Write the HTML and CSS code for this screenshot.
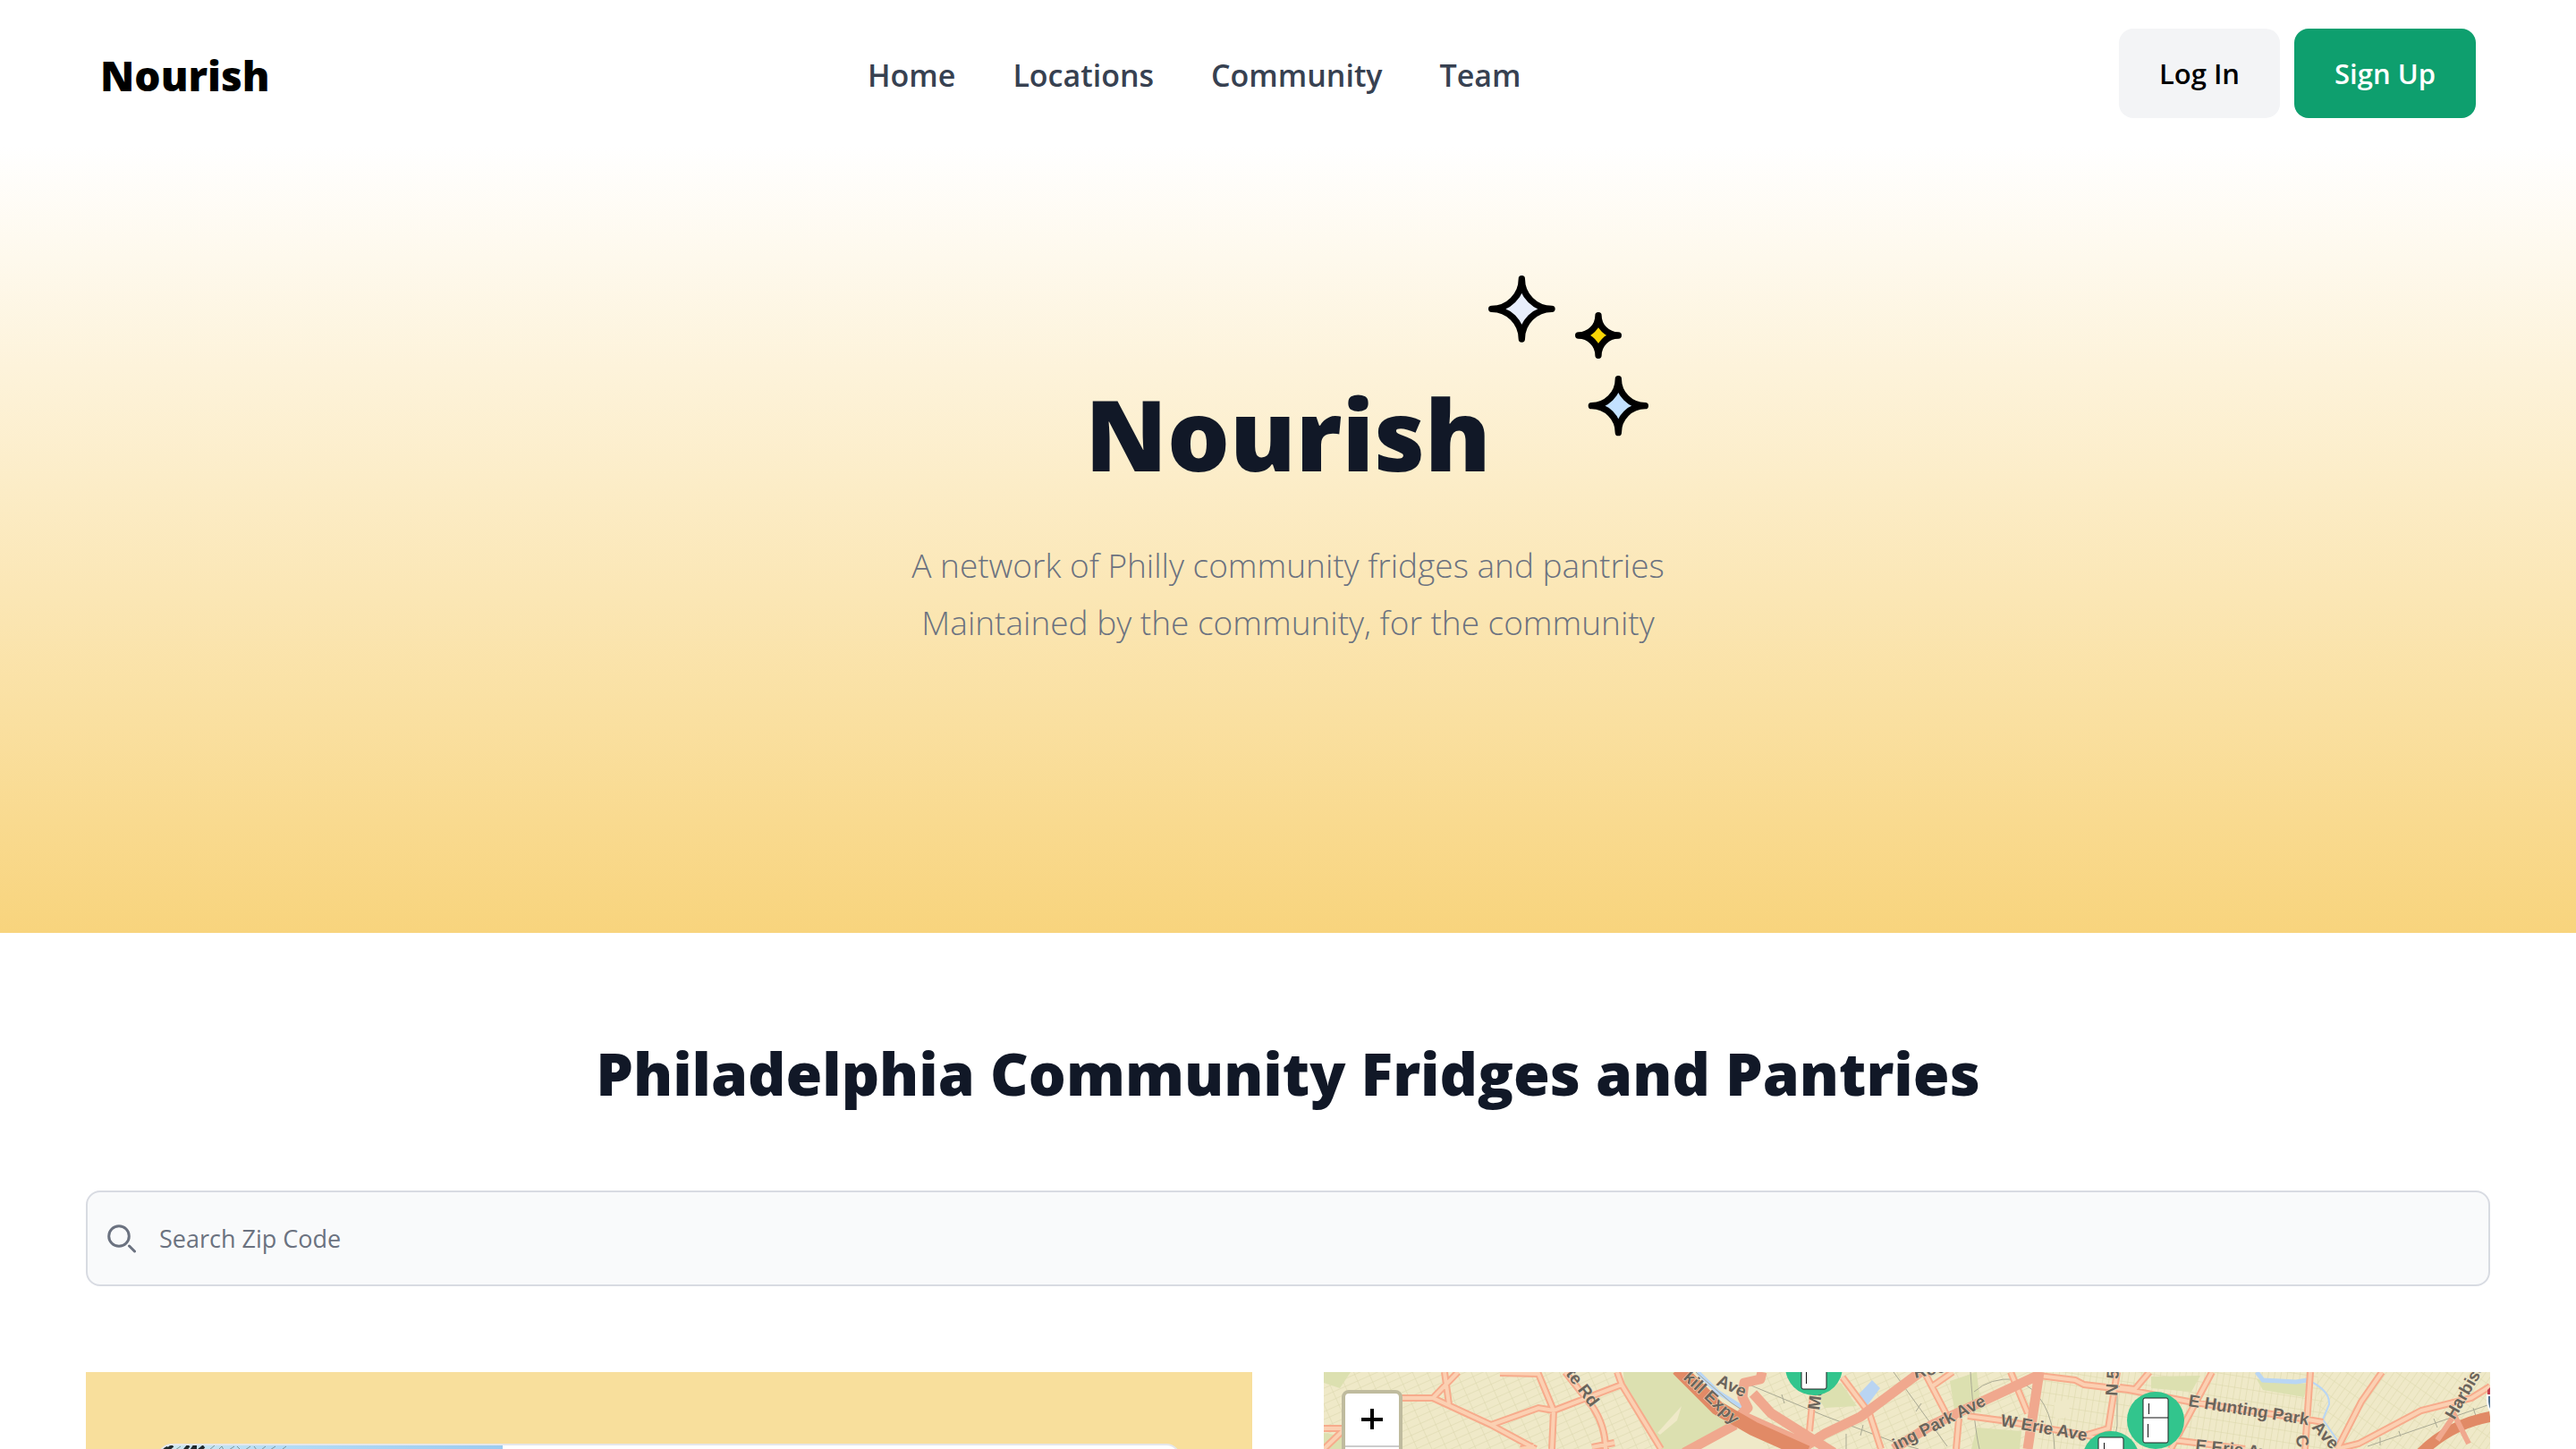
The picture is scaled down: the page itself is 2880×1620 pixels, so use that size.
FILE: index.html
```html
<!DOCTYPE html>
<html lang="en">
<head>
<meta charset="utf-8">
<meta name="viewport" content="width=device-width, initial-scale=1">
<title>Nourish</title>
<link rel="stylesheet" href="styles.css">
</head>
<body>
<header class="site-header">
  <a class="logo" href="#">Nourish</a>
  <nav class="nav">
    <a href="#">Home</a>
    <a href="#locations">Locations</a>
    <a href="#">Community</a>
    <a href="#">Team</a>
  </nav>
  <div class="actions">
    <button class="btn btn-light" type="button">Log In</button>
    <button class="btn btn-green" type="button">Sign Up</button>
  </div>
</header>

<section class="hero">
  <h1 class="hero-title">Nourish
    <svg class="sparkles" viewBox="0 0 720 660" aria-hidden="true">
      <path fill="#e8eefb" d="M187 65A101 101 0 0 0 288 166A101 101 0 0 0 187 267A101 101 0 0 0 86 166A101 101 0 0 0 187 65Z"/>
      <path fill="#f9d605" d="M444 188A67 67 0 0 0 511 255A67 67 0 0 0 444 322A67 67 0 0 0 377 255A67 67 0 0 0 444 188Z"/>
      <path fill="#c3e1ff" d="M511 401A90 90 0 0 0 601 491A90 90 0 0 0 511 581A90 90 0 0 0 421 491A90 90 0 0 0 511 401Z"/>
    </svg>
  </h1>
  <p class="hero-text">A network of Philly community fridges and pantries<br>Maintained by the community, for the community</p>
</section>

<main class="locations" id="locations">
  <h2 class="section-title">Philadelphia Community Fridges and Pantries</h2>
  <form class="search">
    <svg class="search-icon" viewBox="0 0 32 32" aria-hidden="true"><circle cx="13" cy="13" r="11.3"/><path d="M24.500 24L30.500 30"/></svg>
    <input class="search-input" type="search" placeholder="Search Zip Code" aria-label="Search Zip Code">
  </form>
  <div class="columns">
    <div class="list">
      <article class="card">
        <svg class="photo" viewBox="0 0 384 280" aria-hidden="true">
          <defs><linearGradient id="sky"><stop offset="0" stop-color="#cfe9ee"/><stop offset=".35" stop-color="#b4dcf6"/><stop offset="1" stop-color="#9ccbf0"/></linearGradient></defs>
          <rect width="384" height="280" fill="url(#sky)"/>
          <path stroke="#20292b" stroke-width="4" fill="none" d="M2 6L9 1M8 6L15 0M28 6L33 0M36 6L40 0L40 6M44 6L50 1"/>
          <path stroke="#7d9694" stroke-width="1" fill="none" d="M18 5L24 1M56 5L62 0M66 5L70 1L72 5M78 5L84 1M87 1L91 5M96 5L102 1M106 1L109 5M114 5L119 1M124 5L130 1M138 4L142 1"/>
        </svg>
      </article>
    </div>
    <div class="map">
      <svg class="map-art" viewBox="0 0 1304 652" aria-hidden="true">
        <defs>
          <pattern id="gridA" width="15" height="8" patternUnits="userSpaceOnUse" patternTransform="rotate(-24)"><path d="M0 0H15M0 0V8" stroke="#d9d5ac" fill="none"/></pattern>
          <pattern id="gridB" width="7" height="13" patternUnits="userSpaceOnUse" patternTransform="rotate(9)"><path d="M0 0H7M0 0V13" stroke="#d9d5a8" fill="none"/></pattern>
          <pattern id="gridC" width="7" height="16" patternUnits="userSpaceOnUse" patternTransform="rotate(35)"><path d="M0 0H7M0 0V16" stroke="#dbd7ac" fill="none"/></pattern>
        </defs>
        <rect width="1304" height="652" fill="#efe9c8"/>
        <path fill="url(#gridA)" d="M0 0H330L377 86V652H0Z"/>
        <path fill="url(#gridA)" d="M490 0H800L787 86V652H500Z"/>
        <path fill="url(#gridB)" d="M800 0H1110L1130 86V652H787Z"/>
        <path fill="url(#gridC)" d="M1110 0H1304V652H1130Z"/>
        <g fill="#dce0b0">
          <path d="M335 0H400L460 56L403 86H377L336 16Z"/>
          <path d="M0 0H30L18 18L0 12ZM0 68L24 72V86H0ZM545 18L578 12L596 38L560 40ZM700 10L730 0L735 45L705 42Z"/>
          <path d="M1043 8L1100 13L1096 28L1050 20ZM925 5L980 4L970 22L925 18ZM730 62L780 66L778 86H724Z"/>
        </g>
        <path fill="#efe9c8" d="M373 68L400 38L395 54L376 70ZM816 34L835 30L832 50L818 53Z"/>
        <g fill="#b9d4f2">
          <path d="M613 9L622 18L607 38L597 26Z"/>
          <path d="M473 49L503 59L540 76L535 80L500 67Z"/>
        </g>
        <g class="water">
          <path d="M418 0L440 22L467 39"/>
          <path d="M1043 0L1050 9L1087 11L1100 9"/>
          <path class="creek" d="M1100 9Q1125 20 1124 36L1117 53L1133 76V110"/>
        </g>
        <g class="rail">
          <path d="M416 0L455 34L470 44M473 13L560 49L640 79L665 86M637 0L697 83M723 0Q727 60 733 86M727 22Q745 6 773 8Q815 25 817 86M887 0V60L882 86M1167 83L1304 36"/>
          <path d="M512 25L515 35M603 59L600 71M668 35L662 44M584 69V86M1181 73V82M1241 52L1245 62M1285 40L1288 49M1202 66L1204 72"/>
        </g>
        <g class="road">
          <path id="streets" d="M0 63H24L0 86M85 29H122L187 59L237 86M122 29L150 0M135 0L140 36M197 1L240 2L257 43L255 86M187 59L240 40L257 43L333 14L328 0M333 14L377 86M270 0L300 38Q315 60 315 86M580 6L610 46L623 86M673 3L697 49M710 52L707 86M680 16L703 0M768 0L787 46M547 26L543 66M800 4L840 9L850 14L900 20L967 33L1100 53L1117 56M720 49L757 54L860 72M887 0L877 63L857 69L880 95M993 0L947 86M923 0L907 19L890 17M1103 0L1097 86M1183 0L1160 33L1133 86M1133 86L1157 80L1227 43L1283 29L1304 16M950 76L1030 86M220 86L235 83M300 84L325 79"/>
        </g>
        <g class="road-core"><use href="#streets"/></g>
        <g class="avenue">
          <path d="M527 92L540 82L560 69L600 50L667 0M637 86L680 59L800 3M800 0L787 86M490 0L488 8L470 12L468 28L474 40L466 48L537 80M480 24L500 46L543 73L570 90M403 90L460 59"/>
        </g>
        <g class="highway"><path d="M396 -4L440 40L480 63L540 90"/><path class="expressway" d="M1227 90Q1260 58 1304 50"/></g>
        <path class="ramp" d="M1245 76L1264 48L1280 80"/>
        <path fill="#c43f4f" d="M1304 17L1301 20V28H1304Z"/><path fill="#4f7190" stroke="#fff" stroke-width="2" d="M1306 26H1301Q1300 40 1306 45Z"/>
        <g class="labels">
          <text transform="translate(270 2) rotate(53)">te Rd</text>
          <text transform="translate(401 7) rotate(43)">kill Expy</text>
          <text transform="translate(438 14) rotate(25)">Ave</text>
          <text transform="translate(554 43) rotate(-82)">Ma</text>
          <text transform="translate(661 7) rotate(-12)">Roosevelt</text>
          <text transform="translate(640 88) rotate(-27)">ing Park Ave</text>
          <text transform="translate(756 60) rotate(10)">W Erie Ave</text>
          <text transform="translate(887 27) rotate(-86)">N 5th St</text>
          <text transform="translate(966 38) rotate(9)">E Hunting Park</text>
          <text transform="translate(1104 62) rotate(48)">Ave</text>
          <text transform="translate(974 88) rotate(6)">E Erie Ave</text>
          <text transform="translate(1086 72) rotate(75)">C St</text>
          <text transform="translate(1264 54) rotate(-60)">Harbison</text>
        </g>
        <defs>
          <g id="fridge"><circle r="32" fill="#32c58d"/><rect x="-14" y="-25" width="28" height="50" rx="2" fill="#fff" stroke="#222"/><path stroke="#111" d="M-14 -3H14M-7.500 -19V-7M-8.500 4V19"/></g>
        </defs>
        <use href="#fridge" x="548" y="-6"/>
        <use href="#fridge" x="880" y="98"/>
        <use href="#fridge" x="930" y="54"/>
      </svg>
      <div class="zoom-control">
        <button type="button" aria-label="Zoom in"><svg viewBox="0 0 24 24" aria-hidden="true"><path d="M12 0V23M0 12H24"/></svg></button>
        <button type="button" aria-label="Zoom out"><svg viewBox="0 0 24 24" aria-hidden="true"><path d="M0 12H24"/></svg></button>
      </div>
    </div>
  </div>
</main>
</body>
</html>
```
FILE: styles.css
```css
* {
  box-sizing: border-box;
}

body {
  margin: 0;
  height: 100vh;
  display: flex;
  flex-direction: column;
  overflow: hidden;
  background: #fff;
  color: #111827;
  font-family: "Open Sans", "Noto Sans", sans-serif;
}

.site-header {
  display: flex;
  flex: none;
  align-items: center;
  justify-content: space-between;
  padding: 32px 112px;
}

.logo {
  padding-top: 4px;
  color: #000;
  font-size: 46px;
  font-weight: 800;
  line-height: 64px;
  text-decoration: none;
}

.nav {
  display: flex;
  gap: 64px;
  padding-top: 4px;
}

.nav a {
  color: #374151;
  font-size: 34px;
  font-weight: 600;
  line-height: 56px;
  text-decoration: none;
}

.actions {
  display: flex;
  gap: 16px;
}

.btn {
  padding: 26px 45px;
  border: 0;
  border-radius: 16px;
  font: 600 31px/48px "Open Sans", "Noto Sans", sans-serif;
}

.btn-light {
  background: #f3f4f6;
  color: #000;
}

.btn-green {
  background: #0e9f6e;
  color: #fff;
}

.hero {
  display: flex;
  flex: none;
  flex-direction: column;
  align-items: center;
  padding: 252px 64px 315px;
  background: linear-gradient(#fff, #f8d47d);
  text-align: center;
}

.hero-title {
  position: relative;
  margin: 0 0 48px;
  font-size: 110px;
  font-weight: 800;
  line-height: 136px;
}

.sparkles {
  position: absolute;
  bottom: 42px;
  left: 100%;
  width: 240px;
  margin-left: -28px;
  stroke: #000;
  stroke-width: 22;
  stroke-linejoin: round;
}

.hero-text {
  margin: 0;
  color: #6b7280;
  font-size: 37px;
  font-weight: 300;
  line-height: 64px;
}

.locations {
  display: flex;
  flex: 1;
  flex-direction: column;
  min-height: 0;
  padding: 108px 96px 0;
}

.section-title {
  margin: 0 0 84px;
  font-size: 66px;
  font-weight: 800;
  line-height: 96px;
  text-align: center;
}

.search {
  display: flex;
  flex: none;
  align-items: center;
  gap: 26px;
  margin-bottom: 96px;
  padding: 0 22px;
  border: 2px solid #d8dbe2;
  border-radius: 16px;
  background: #f9fafb;
}

.search-icon {
  width: 32px;
  fill: none;
  stroke: #6b7280;
  stroke-width: 3;
  stroke-linecap: round;
}

.search-input {
  flex: 1;
  height: 103px;
  padding: 0;
  border: 0;
  outline: 0;
  background: none;
  color: #111827;
  font: 400 27px/40px "Open Sans", "Noto Sans", sans-serif;
}

.search-input::placeholder {
  color: #6b7280;
  opacity: 1;
}

.columns {
  display: grid;
  flex: 1;
  grid-template-columns: 1fr 1fr;
  gap: 80px;
  min-height: 0;
}

.list {
  padding: 80px;
  overflow: hidden;
  background: #f8df9c;
}

.card {
  overflow: hidden;
  border: 2px solid #e5e7eb;
  border-radius: 16px;
  background: #fff;
}

.photo {
  display: block;
  width: 384px;
}

.map {
  position: relative;
  overflow: hidden;
}

.map-art {
  display: block;
  width: 100%;
}

.road {
  fill: none;
  stroke: #f7ab8c;
  stroke-width: 8;
}

.road-core {
  fill: none;
  stroke: #fbd0b2;
  stroke-width: 4;
}

.avenue {
  fill: none;
  stroke: #f0a88e;
  stroke-width: 11;
  stroke-linejoin: round;
}

.highway {
  fill: none;
  stroke: #e18a66;
  stroke-width: 16;
}

.expressway {
  stroke-width: 12;
}

.ramp {
  fill: none;
  stroke: #f0a88e;
  stroke-width: 6;
}

.water {
  fill: none;
  stroke: #b9d6f4;
  stroke-width: 5;
}

.creek {
  stroke-width: 2;
}

.rail {
  fill: none;
  stroke: #a9a994;
  stroke-width: 1;
}

.labels {
  fill: #6a645b;
  stroke: #f0e0c4;
  stroke-width: 1;
  paint-order: stroke;
  font: 600 19px "Liberation Sans", sans-serif;
}

.zoom-control {
  position: absolute;
  top: 20px;
  left: 20px;
  border: 4px solid #bfbb9e;
  border-radius: 8px;
  background: #fff;
}

.zoom-control button {
  display: grid;
  place-items: center;
  width: 60px;
  height: 60px;
  padding: 0;
  border: 0;
  border-bottom: 2px solid #ccc;
  background: none;
}

.zoom-control svg {
  width: 24px;
  fill: none;
  stroke: #000;
  stroke-width: 4;
}
```
